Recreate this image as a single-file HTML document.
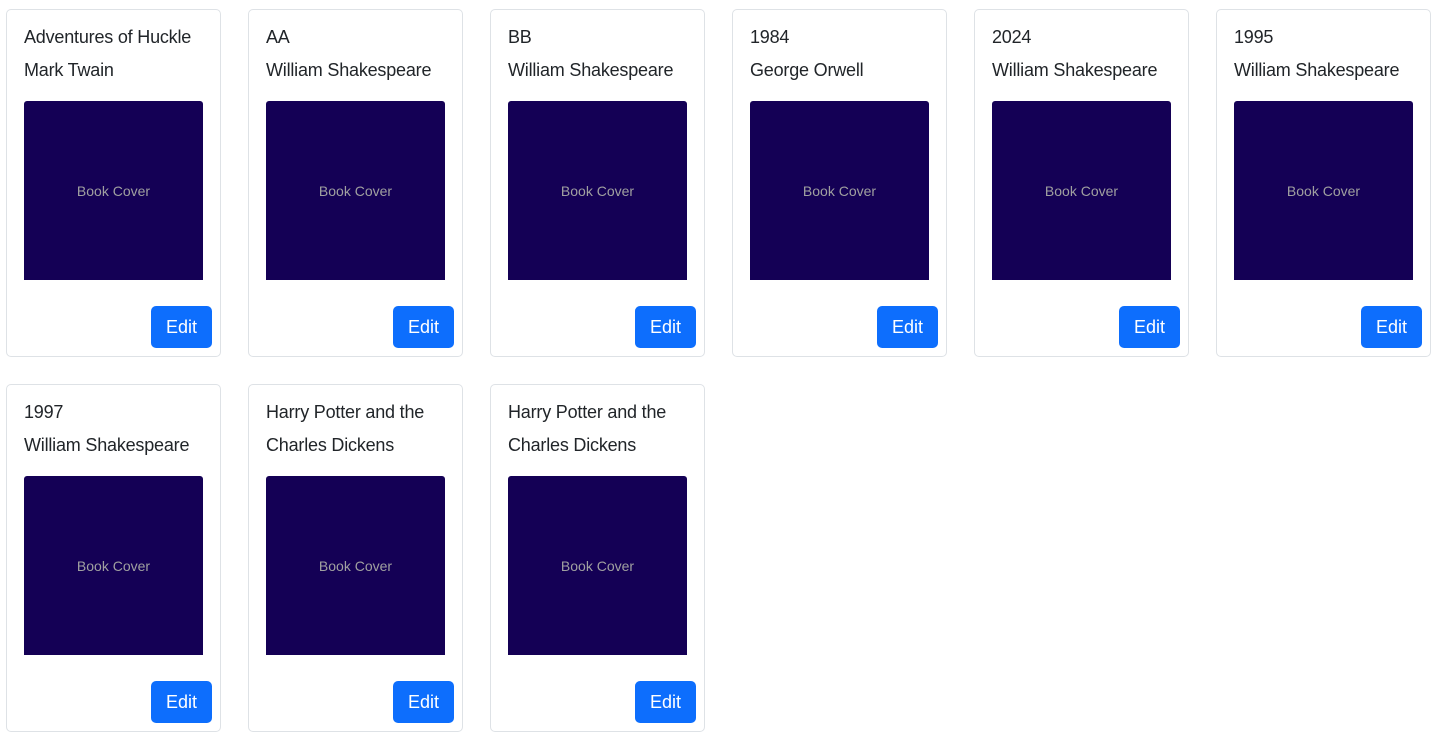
<!DOCTYPE html>
<html><head><style>
body{margin:0;background:#fff;font-family:"Liberation Sans",sans-serif;}
.card{position:absolute;width:215px;height:348px;border:1px solid #dee2e6;border-radius:5px;box-sizing:border-box;background:#fff;overflow:hidden}
.t{position:absolute;left:17px;width:190px;white-space:nowrap;overflow:hidden;font-size:18px;color:#212529;line-height:22px;letter-spacing:-0.2px}
.img{position:absolute;left:17px;top:91px;width:179px;height:179px;background:#140055;border-radius:3px 3px 0 0;color:#a0a0a0;font-size:14px;display:flex;align-items:center;justify-content:center}
.btn{position:absolute;left:144px;top:296px;width:61px;height:42px;background:#0d6efd;border-radius:5px;color:#fff;font-size:18px;display:flex;align-items:center;justify-content:center}
</style></head><body>
<div class="card" style="left:6px;top:9px"><div class="t" style="top:16px">Adventures of Huckle</div><div class="t" style="top:49px">Mark Twain</div><div class="img">Book Cover</div><div class="btn">Edit</div></div>
<div class="card" style="left:248px;top:9px"><div class="t" style="top:16px">AA</div><div class="t" style="top:49px">William Shakespeare</div><div class="img">Book Cover</div><div class="btn">Edit</div></div>
<div class="card" style="left:490px;top:9px"><div class="t" style="top:16px">BB</div><div class="t" style="top:49px">William Shakespeare</div><div class="img">Book Cover</div><div class="btn">Edit</div></div>
<div class="card" style="left:732px;top:9px"><div class="t" style="top:16px">1984</div><div class="t" style="top:49px">George Orwell</div><div class="img">Book Cover</div><div class="btn">Edit</div></div>
<div class="card" style="left:974px;top:9px"><div class="t" style="top:16px">2024</div><div class="t" style="top:49px">William Shakespeare</div><div class="img">Book Cover</div><div class="btn">Edit</div></div>
<div class="card" style="left:1216px;top:9px"><div class="t" style="top:16px">1995</div><div class="t" style="top:49px">William Shakespeare</div><div class="img">Book Cover</div><div class="btn">Edit</div></div>
<div class="card" style="left:6px;top:384px"><div class="t" style="top:16px">1997</div><div class="t" style="top:49px">William Shakespeare</div><div class="img">Book Cover</div><div class="btn">Edit</div></div>
<div class="card" style="left:248px;top:384px"><div class="t" style="top:16px">Harry Potter and the</div><div class="t" style="top:49px">Charles Dickens</div><div class="img">Book Cover</div><div class="btn">Edit</div></div>
<div class="card" style="left:490px;top:384px"><div class="t" style="top:16px">Harry Potter and the</div><div class="t" style="top:49px">Charles Dickens</div><div class="img">Book Cover</div><div class="btn">Edit</div></div>
</body></html>
